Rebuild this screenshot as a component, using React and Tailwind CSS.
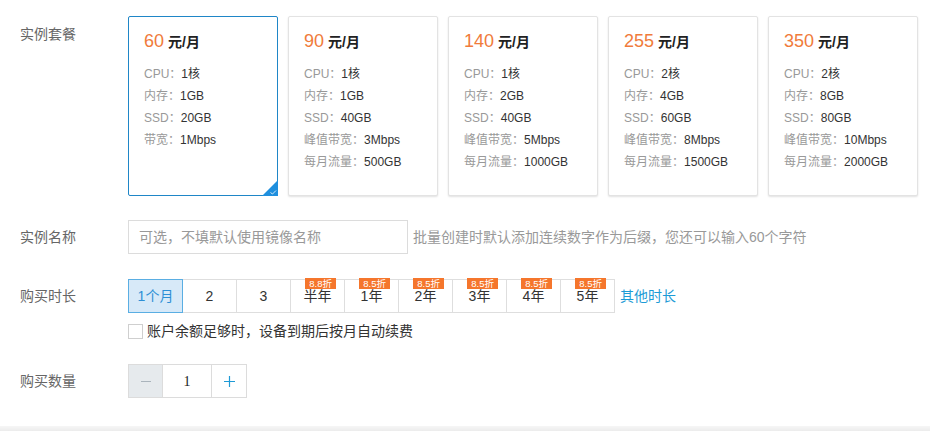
import React from 'react';

const plans = [
  { price: 60, specs: [['CPU', '1核'], ['内存', '1GB'], ['SSD', '20GB'], ['带宽', '1Mbps']] },
  { price: 90, specs: [['CPU', '1核'], ['内存', '1GB'], ['SSD', '40GB'], ['峰值带宽', '3Mbps'], ['每月流量', '500GB']] },
  { price: 140, specs: [['CPU', '1核'], ['内存', '2GB'], ['SSD', '40GB'], ['峰值带宽', '5Mbps'], ['每月流量', '1000GB']] },
  { price: 255, specs: [['CPU', '2核'], ['内存', '4GB'], ['SSD', '60GB'], ['峰值带宽', '8Mbps'], ['每月流量', '1500GB']] },
  { price: 350, specs: [['CPU', '2核'], ['内存', '8GB'], ['SSD', '80GB'], ['峰值带宽', '10Mbps'], ['每月流量', '2000GB']] },
];

const durations = [
  { label: '1个月' },
  { label: '2' },
  { label: '3' },
  { label: '半年', badge: '8.8折' },
  { label: '1年', badge: '8.5折' },
  { label: '2年', badge: '8.5折' },
  { label: '3年', badge: '8.5折' },
  { label: '4年', badge: '8.5折' },
  { label: '5年', badge: '8.5折' },
];

function PlanCard({ plan, selected }) {
  return (
    <div
      className={
        'relative w-[150px] h-[180px] rounded-[2px] bg-white pl-[15px] pt-[12px] ' +
        (selected
          ? 'border border-[#1f86c7]'
          : 'border border-[#e3e3e3] shadow-[0_1px_2px_rgba(0,0,0,0.12)]')
      }
    >
      <div className="h-[24px] leading-[24px] mb-[10px]">
        <span className="text-[18px] text-[#f07b3b]">{plan.price}</span>
        <span className="ml-[4px] text-[14px] font-bold text-[#222]">元/月</span>
      </div>
      {plan.specs.map(([k, v]) => (
        <div key={k} className="h-[22px] leading-[22px] text-[12px]">
          <span className="text-[#999]">{k}：</span>
          <span className="text-[#333]">{v}</span>
        </div>
      ))}
      {selected && (
        <div className="absolute right-[-1px] bottom-[-1px] w-[16px] h-[16px] overflow-hidden">
          <svg width="16" height="16" viewBox="0 0 16 16">
            <path d="M16 0 L16 16 L0 16 Z" fill="#1f8fde" />
            <path d="M8.5 12.5 L10.5 14 L14 10.5" stroke="#cfe9fb" strokeWidth="1" fill="none" />
          </svg>
        </div>
      )}
    </div>
  );
}

function Label({ children, className }) {
  return <div className={'w-[108px] shrink-0 text-[14px] text-[#666] ' + (className || '')}>{children}</div>;
}

export default function App() {
  return (
    <div className="w-[930px] h-[431px] bg-white relative font-['Liberation_Sans','Noto_Sans_CJK_SC',sans-serif] overflow-hidden">
      <div className="pl-[20px] pt-[16px]">
        {/* 实例套餐 */}
        <div className="flex">
          <Label className="pt-[8px] leading-[20px]">实例套餐</Label>
          <div className="flex gap-[10px]">
            {plans.map((p, i) => (
              <PlanCard key={p.price} plan={p} selected={i === 0} />
            ))}
          </div>
        </div>

        {/* 实例名称 */}
        <div className="flex items-center mt-[24px]">
          <Label>实例名称</Label>
          <div className="w-[280px] h-[34px] border border-[#dcdcdc] pl-[10px] flex items-center text-[14px] text-[#999]">
            可选，不填默认使用镜像名称
          </div>
          <div className="ml-[5px] text-[14px] text-[#999]">批量创建时默认添加连续数字作为后缀，您还可以输入60个字符</div>
        </div>

        {/* 购买时长 */}
        <div className="flex mt-[25px]">
          <Label className="leading-[34px]">购买时长</Label>
          <div>
            <div className="flex items-center">
              <div className="flex">
                {durations.map((d, i) => (
                  <div
                    key={d.label}
                    className={
                      'relative h-[34px] flex items-center justify-center text-[14px] ' +
                      (i === 0
                        ? 'w-[55px] bg-[#d7e9f8] border border-[#5aaee3] text-[#2d8fd5]'
                        : 'w-[54px] border-y border-r border-[#dedede] text-[#333]')
                    }
                  >
                    {d.label}
                    {d.badge && (
                      <span className="absolute top-[-2px] right-[8px] h-[11px] px-[4px] leading-[11px] text-[9.5px] text-white bg-[#f5762c]">
                        {d.badge}
                      </span>
                    )}
                  </div>
                ))}
              </div>
              <a className="ml-[5px] text-[14px] text-[#1d9bd6]">其他时长</a>
            </div>
            <label className="flex items-center mt-[11px] h-[15px]">
              <span className="w-[15px] h-[15px] border border-[#cfcfcf] bg-white" />
              <span className="ml-[4px] text-[14px] text-[#333]">账户余额足够时，设备到期后按月自动续费</span>
            </label>
          </div>
        </div>

        {/* 购买数量 */}
        <div className="flex items-center mt-[25px]">
          <Label>购买数量</Label>
          <div className="flex h-[34px] border border-[#dcdcdc]">
            <div className="w-[34px] flex items-center justify-center bg-[#e6eaed] border-r border-[#dcdcdc]">
              <span className="block w-[10px] h-px bg-[#aab4bc]" />
            </div>
            <div className="w-[49px] flex items-center justify-center border-r border-[#dcdcdc] text-[14px] text-[#222] font-['Liberation_Serif',serif]">
              1
            </div>
            <div className="w-[34px] flex items-center justify-center">
              <svg width="11" height="11" viewBox="0 0 11 11">
                <path d="M5.5 0 V11 M0 5.5 H11" stroke="#1e9ad6" strokeWidth="1.2" />
              </svg>
            </div>
          </div>
        </div>
      </div>
      <div className="absolute left-0 right-0 bottom-0 h-[5px] bg-gradient-to-b from-[#f6f6f6] to-[#ececec]" />
    </div>
  );
}
